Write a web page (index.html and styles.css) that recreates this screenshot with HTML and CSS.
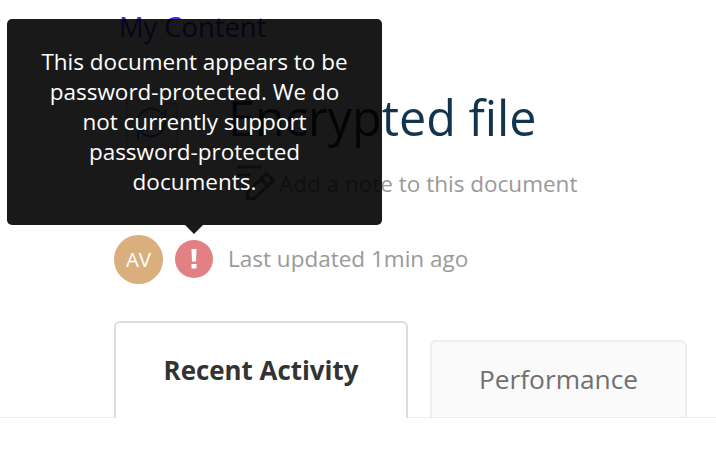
FILE: index.html
```html
<!DOCTYPE html>
<html lang="en">
<head>
    <meta charset="UTF-8">
    <meta name="viewport" content="width=device-width, initial-scale=1.0">
    <title>Encrypted file</title>
    <link rel="stylesheet" href="styles.css">
</head>
<body>

    <div class="header">
        <a class="breadcrumb">My Content</a>

        <div class="file">
            <svg class="file-icon" width="52" height="60" viewBox="0 0 52 60" fill="none">
                <path d="M1 1h36l14 14v44H1z" stroke="#ccc" stroke-width="1.5"/>
                <path d="M37 1v14h14" stroke="#ccc" stroke-width="1.5"/>
                <path d="M12 38a14 14 0 0 1 25-12M39 21v8h-9M39 33a14 14 0 0 1-25 9M12 50v-9h9" stroke="#1272b6" stroke-width="1.8"/>
            </svg>
            <div class="file-info">
                <h1>Encrypted file</h1>
                <div class="note">
                    <svg width="40" height="36" viewBox="0 0 40 36" fill="none" stroke="#888" stroke-width="3.2">
                        <path d="M1 2h25M1 10h14"/>
                        <path d="M11.5 27L30.5 8.500l7 7-19 18h-7zM25 14l7 7"/>
                    </svg>
                    <span>Add a note to this document</span>
                </div>
            </div>
        </div>

        <div class="status">
            <span class="avatar">AV</span>
            <span class="alert">
                <svg width="6" height="20" viewBox="0 0 6 20" fill="#fff">
                    <path d="M0.5 0h5L5 12.5H1zM0.5 15h5v4.5h-5z"/>
                </svg>
                <span class="tooltip">This document appears to be password-protected. We do not currently support password-protected documents.</span>
            </span>
            <span class="updated">Last updated 1min ago</span>
        </div>
    </div>

    <div class="tabs">
        <div class="tab active">Recent Activity</div>
        <div class="tab">Performance</div>
    </div>

</body>
</html>
```
FILE: styles.css
```css
body {
    font-family: "Open Sans", sans-serif;
    margin: 0;
    background: #fff;
    overflow: hidden;
}

.header {
    box-sizing: border-box;
    height: 321px;
    padding: 8px 0 0 114px;
}

.breadcrumb {
    display: block;
    padding-left: 5px;
    font-size: 27.3px;
    line-height: 37px;
    color: #4a2ee8;
}

.file {
    display: flex;
    height: 189px;
}

.file-icon {
    margin: 44px 0 0 12px;
}

.file-info {
    margin: 38px 0 0 50px;
}

h1 {
    margin: 0;
    font-size: 48.5px;
    font-weight: normal;
    line-height: 68px;
    color: #12344d;
    white-space: nowrap;
}

.note {
    display: flex;
    align-items: center;
    gap: 3px;
    height: 64px;
    margin-left: 8px;
    font-size: 22.5px;
    color: #999;
    white-space: nowrap;
}

.status {
    display: flex;
    align-items: center;
    height: 50px;
}

.avatar, .alert {
    display: flex;
    align-items: center;
    justify-content: center;
    border-radius: 50%;
}

.avatar {
    width: 49px;
    height: 49px;
    background: #dbae7e;
    color: #fff;
    font-size: 20.5px;
}

.alert {
    position: relative;
    width: 38px;
    height: 38px;
    margin: 0 15px 0 12px;
    background: #e28183;
}

.tooltip {
    position: absolute;
    left: -168px;
    bottom: 53px;
    box-sizing: border-box;
    width: 375px;
    height: 206px;
    padding: 28px 30px;
    border-radius: 5px;
    background: rgba(0, 0, 0, 0.9);
    color: #fff;
    font-size: 22.5px;
    line-height: 30px;
    text-align: center;
}

.tooltip::after {
    content: "";
    position: absolute;
    top: 100%;
    left: 178px;
    border: 9px solid transparent;
    border-top-color: #1a1a1a;
    border-bottom: none;
}

.updated {
    padding-bottom: 1px;
    font-size: 22.5px;
    line-height: 30px;
    color: #999;
}

.tabs {
    display: flex;
    align-items: flex-end;
    gap: 23px;
    height: 97px;
    padding-left: 114px;
    box-shadow: inset 0 -1px #eee, 0 1px #f4f4f4;
}

.tab {
    box-sizing: border-box;
    width: 257px;
    height: 78px;
    margin-left: -1px;
    border: 2px solid #ededed;
    border-bottom-width: 1px;
    border-radius: 6px 6px 0 0;
    background: #fafafa;
    color: #707070;
    font-size: 26.3px;
    line-height: 74px;
    text-align: center;
}

.tab.active {
    width: 294px;
    height: 98px;
    margin: 0 0 -1px;
    border-color: #dcdcdc;
    border-bottom: none;
    background: #fff;
    color: #333;
    font-size: 25.9px;
    font-weight: bold;
    line-height: 94px;
}
```
